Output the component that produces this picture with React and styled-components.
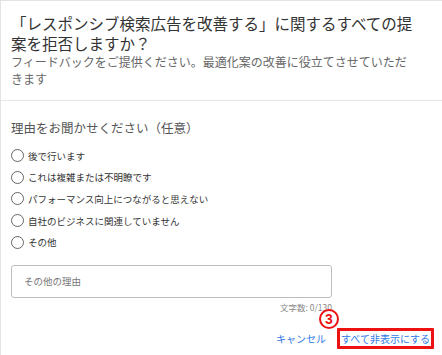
import styled, { createGlobalStyle } from "styled-components";

const GlobalStyle = createGlobalStyle`
    html, body {
        margin: 0;
        padding: 0;
        background: #ffffff;
    }

    body {
        font-family: "Noto Sans CJK JP", "Noto Sans", sans-serif;
    }
`;

const Dialog = styled.div`
    box-sizing: border-box;
    width: 442px;
    height: 355px;
    border-top: 1px solid #e3e3e3;
    border-left: 1px solid #e3e3e3;
    overflow: hidden;
`;

const Header = styled.div`
    padding: 12px 26px 13px 10px;
    border-bottom: 1px solid #e6e6e6;
`;

const Title = styled.h2`
    margin: 0;
    font-size: 15.5px;
    line-height: 20px;
    font-weight: 400;
    color: #333333;
`;

const Subtitle = styled.p`
    margin: 0;
    font-size: 12px;
    line-height: 17px;
    color: #666666;
`;

const Body = styled.div`
    padding: 19px 0 0 10px;
`;

const SectionLabel = styled.div`
    font-size: 12.5px;
    line-height: 16px;
    color: #555555;
    margin-bottom: 9px;
`;

const Options = styled.div`
    display: flex;
    flex-direction: column;
`;

const Option = styled.label`
    display: flex;
    align-items: center;
    gap: 4px;
    height: 21.6px;
    font-size: 9.5px;
    color: #333333;
`;

const Circle = styled.span`
    box-sizing: border-box;
    width: 13px;
    height: 13px;
    border: 1.5px solid #666666;
    border-radius: 50%;
    flex-shrink: 0;
`;

const ReasonBox = styled.div`
    box-sizing: border-box;
    width: 321px;
    height: 33px;
    margin-top: 12px;
    padding-left: 12px;
    display: flex;
    align-items: center;
    border: 1px solid #bdbdbd;
    border-radius: 3px;
    font-size: 9.5px;
    color: #777777;
`;

const Counter = styled.div`
    width: 321px;
    margin-top: 3px;
    text-align: right;
    font-size: 8.5px;
    line-height: 12px;
    color: #8a8a8a;
`;

const Footer = styled.div`
    display: flex;
    justify-content: flex-end;
    align-items: center;
    gap: 11px;
    margin-top: 15px;
    padding-right: 8px;
`;

const TextButton = styled.span`
    font-size: 10px;
    line-height: 15px;
    color: #2f78e4;
    white-space: nowrap;
`;

const Marked = styled.span`
    position: relative;
    display: inline-flex;
`;

const MarkedButton = styled(TextButton)`
    box-sizing: border-box;
    height: 21px;
    padding: 0 1px;
    display: flex;
    align-items: center;
    border: 3px solid #ee1111;
    border-radius: 1px;
`;

const StepBadge = styled.span`
    position: absolute;
    left: -18px;
    top: -19px;
    box-sizing: border-box;
    width: 20px;
    height: 20px;
    border: 2px solid #ee1111;
    border-radius: 50%;
    background: #ffffff;
    display: flex;
    align-items: center;
    justify-content: center;
    font-family: "Liberation Sans", Arial, sans-serif;
    font-weight: 700;
    font-size: 14px;
    color: #ee1111;
`;

const reasons = [
    "後で行います",
    "これは複雑または不明瞭です",
    "パフォーマンス向上につながると思えない",
    "自社のビジネスに関連していません",
    "その他",
];

export default function App() {
    return (
        <>
            <GlobalStyle />
            <Dialog>
                <Header>
                    <Title>「レスポンシブ検索広告を改善する」に関するすべての提案を拒否しますか？</Title>
                    <Subtitle>フィードバックをご提供ください。最適化案の改善に役立てさせていただきます</Subtitle>
                </Header>
                <Body>
                    <SectionLabel>理由をお聞かせください（任意）</SectionLabel>
                    <Options>
                        {reasons.map((r) => (
                            <Option key={r}>
                                <Circle />
                                {r}
                            </Option>
                        ))}
                    </Options>
                    <ReasonBox>その他の理由</ReasonBox>
                    <Counter>文字数: 0/130</Counter>
                </Body>
                <Footer>
                    <TextButton>キャンセル</TextButton>
                    <Marked>
                        <MarkedButton>すべて非表示にする</MarkedButton>
                        <StepBadge>3</StepBadge>
                    </Marked>
                </Footer>
            </Dialog>
        </>
    );
}
